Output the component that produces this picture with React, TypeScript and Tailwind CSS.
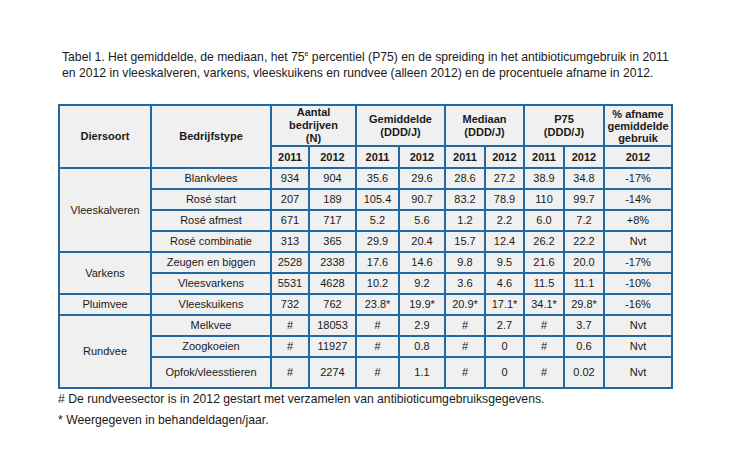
import * as React from 'react';

type Row = {
  group?: string;
  span?: number;
  type: string;
  values: string[];
  tall?: boolean;
};

// rows of the table, group label only on first row of each group
const rows: Row[] = [
  { group: 'Vleeskalveren', span: 4, type: 'Blankvlees', values: ['934', '904', '35.6', '29.6', '28.6', '27.2', '38.9', '34.8', '-17%'] },
  { type: 'Rosé start', values: ['207', '189', '105.4', '90.7', '83.2', '78.9', '110', '99.7', '-14%'] },
  { type: 'Rosé afmest', values: ['671', '717', '5.2', '5.6', '1.2', '2.2', '6.0', '7.2', '+8%'] },
  { type: 'Rosé combinatie', values: ['313', '365', '29.9', '20.4', '15.7', '12.4', '26.2', '22.2', 'Nvt'] },
  { group: 'Varkens', span: 2, type: 'Zeugen en biggen', values: ['2528', '2338', '17.6', '14.6', '9.8', '9.5', '21.6', '20.0', '-17%'] },
  { type: 'Vleesvarkens', values: ['5531', '4628', '10.2', '9.2', '3.6', '4.6', '11.5', '11.1', '-10%'] },
  { group: 'Pluimvee', span: 1, type: 'Vleeskuikens', values: ['732', '762', '23.8*', '19.9*', '20.9*', '17.1*', '34.1*', '29.8*', '-16%'] },
  { group: 'Rundvee', span: 3, type: 'Melkvee', values: ['#', '18053', '#', '2.9', '#', '2.7', '#', '3.7', 'Nvt'] },
  { type: 'Zoogkoeien', values: ['#', '11927', '#', '0.8', '#', '0', '#', '0.6', 'Nvt'] },
  { type: 'Opfok/vleesstieren', values: ['#', '2274', '#', '1.1', '#', '0', '#', '0.02', 'Nvt'], tall: true },
];

const cell = 'border-2 border-[#2169a0] bg-[#f0f0f0] text-center align-middle p-0';

export default function App() {
  return (
    <div className="h-[472px] w-[756px] bg-white text-[#1a1a1a]" style={{ fontFamily: '"Liberation Sans", Arial, sans-serif' }}>
      <div className="whitespace-nowrap px-[62px] pt-[49px] text-[12.2px] leading-[16px]">
        <p>
          Tabel 1. Het gemiddelde, de mediaan, het 75<span className="relative -top-[5px] text-[7px] leading-none">e</span> percentiel (P75) en de spreiding in het antibioticumgebruik in 2011
        </p>
        <p>en 2012 in vleeskalveren, varkens, vleeskuikens en rundvee (alleen 2012) en de procentuele afname in 2012.</p>
      </div>

      <div className="ml-[58px] mt-[23px]">
        <table className="table-fixed border-collapse text-[11px] leading-[13px]">
          <colgroup>
            <col className="w-[92px]" />
            <col className="w-[120px]" />
            <col className="w-[38px]" />
            <col className="w-[47px]" />
            <col className="w-[43px]" />
            <col className="w-[46px]" />
            <col className="w-[40px]" />
            <col className="w-[39px]" />
            <col className="w-[40px]" />
            <col className="w-[40px]" />
            <col className="w-[68px]" />
          </colgroup>
          <thead className="font-bold">
            <tr className="h-[38px]">
              <th rowSpan={2} className={cell}>Diersoort</th>
              <th rowSpan={2} className={cell}>Bedrijfstype</th>
              <th colSpan={2} className={cell}>Aantal<br />bedrijven<br />(N)</th>
              <th colSpan={2} className={cell}>Gemiddelde<br />(DDD/J)</th>
              <th colSpan={2} className={cell}>Mediaan<br />(DDD/J)</th>
              <th colSpan={2} className={cell}>P75<br />(DDD/J)</th>
              <th className={`${cell} leading-[12px]`}>% afname<br />gemiddelde<br />gebruik</th>
            </tr>
            <tr className="h-[22px]">
              {['2011', '2012', '2011', '2012', '2011', '2012', '2011', '2012', '2012'].map((y, i) => (
                <th key={i} className={cell}>{y}</th>
              ))}
            </tr>
          </thead>
          <tbody>
            {rows.map((r) => (
              <tr key={r.type} className={r.tall ? 'h-[31px]' : 'h-[21px]'}>
                {r.group && (
                  <td rowSpan={r.span} className={cell}>{r.group}</td>
                )}
                <td className={cell}>{r.type}</td>
                {r.values.map((v, i) => (
                  <td key={i} className={cell}>{v}</td>
                ))}
              </tr>
            ))}
          </tbody>
        </table>
      </div>

      <div className="ml-[58px] mt-[0px] text-[12.2px] leading-[21px]">
        <p># De rundveesector is in 2012 gestart met verzamelen van antibioticumgebruiksgegevens.</p>
        <p>* Weergegeven in behandeldagen/jaar.</p>
      </div>
    </div>
  );
}
